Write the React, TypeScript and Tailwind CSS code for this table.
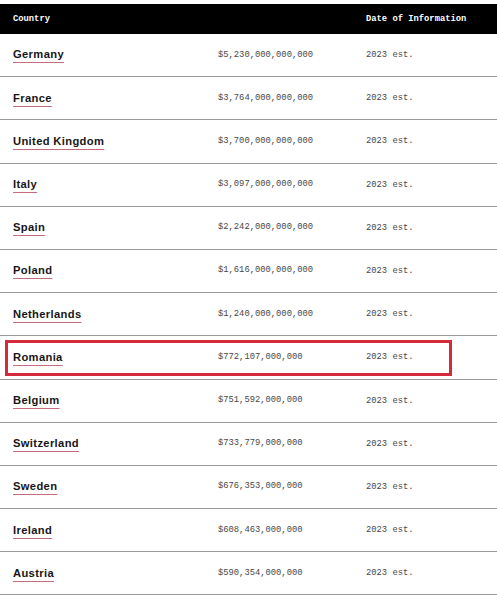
const rows = [
  ["Germany", "$5,230,000,000,000"],
  ["France", "$3,764,000,000,000"],
  ["United Kingdom", "$3,700,000,000,000"],
  ["Italy", "$3,097,000,000,000"],
  ["Spain", "$2,242,000,000,000"],
  ["Poland", "$1,616,000,000,000"],
  ["Netherlands", "$1,240,000,000,000"],
  ["Romania", "$772,107,000,000"],
  ["Belgium", "$751,592,000,000"],
  ["Switzerland", "$733,779,000,000"],
  ["Sweden", "$676,353,000,000"],
  ["Ireland", "$608,463,000,000"],
  ["Austria", "$590,354,000,000"],
];

export default function App() {
  return (
    <div className="w-[497px] h-[600px] bg-white pt-[4px] overflow-hidden">
      <div className="grid grid-cols-[205px_148px_1fr] items-center h-[30px] bg-black pl-[13px] pt-[1px] text-white font-bold text-[8.8px] [font-family:'Liberation_Mono',monospace]">
        <span>Country</span>
        <span></span>
        <span>Date of Information</span>
      </div>
      {rows.map(([name, value]) => (
        <div
          key={name}
          className="relative grid grid-cols-[205px_148px_1fr] items-center h-[43.2px] border-b-[1.5px] border-[#9a9a9a] pl-[13px]"
        >
          <span className="text-[11.2px] leading-none font-bold text-[#161616] [font-family:'Liberation_Sans',Arial,sans-serif] tracking-[0.35px] underline decoration-[#c76b80] decoration-1 underline-offset-[4px]">
            {name}
          </span>
          <span className="text-[8.8px] text-[#484848] [font-family:'Liberation_Mono',monospace]">{value}</span>
          <span className="text-[8.8px] text-[#484848] [font-family:'Liberation_Mono',monospace] pt-[1px]">2023 est.</span>
          {name === "Romania" && (
            <div className="absolute left-[5px] right-[45px] top-[4px] bottom-[3px] border-[3px] border-[#d42a3c]" />
          )}
        </div>
      ))}
    </div>
  );
}
